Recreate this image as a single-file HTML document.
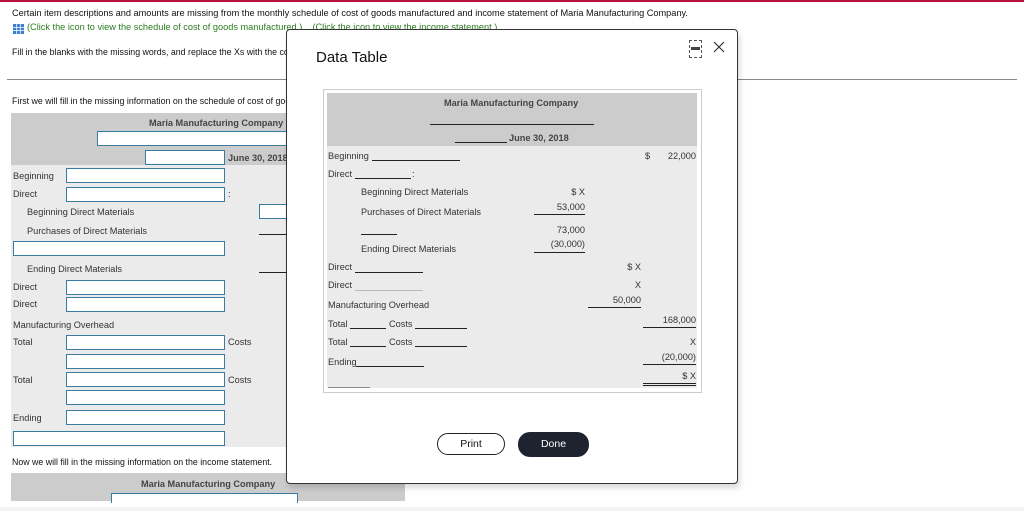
<!DOCTYPE html>
<html><head><style>
*{margin:0;padding:0;box-sizing:border-box}
body{width:1024px;height:511px;overflow:hidden;background:#fff;font-family:"Liberation Sans",Arial,sans-serif;color:#222;position:relative}
.a{position:absolute;white-space:nowrap}
.t{font-size:9.2px;color:#333;margin-top:-1px}
.in{position:absolute;background:#fff;border:1px solid #3a7ca0;height:15px}
.ul{position:absolute;border-bottom:1px solid #222;height:0}
.r{text-align:right}
</style></head><body>
<div class="a" style="left:0;top:0;width:1024px;height:2px;background:#b8123e"></div>
<div class="a" style="left:12px;top:8px;font-size:9.2px;color:#111">Certain item descriptions and amounts are missing from the monthly schedule of cost of goods manufactured and income statement of Maria Manufacturing Company.</div>
<svg class="a" style="left:13px;top:24px" width="11" height="10"><rect x="0" y="0" width="11" height="10" fill="#3b7fd0"/><path d="M0 3.5H11M0 6.5H11M3.7 0V10M7.3 0V10" stroke="#fff" stroke-width="0.8"/></svg>
<div class="a" style="left:27px;top:22px;font-size:9.2px;color:#2a7d1f">(Click the icon to view the schedule of cost of goods manufactured.)&nbsp;&nbsp;&nbsp;&nbsp;(Click the icon to view the income statement.)</div>
<div class="a" style="left:12px;top:47px;font-size:8.8px;color:#111">Fill in the blanks with the missing words, and replace the Xs with the correct amounts.</div>
<div class="a" style="left:7px;top:79px;width:1010px;height:1px;background:#888"></div>
<div class="a" style="left:12px;top:96px;font-size:8.8px;color:#111">First we will fill in the missing information on the schedule of cost of goods manufactured.</div>

<div class="a" style="left:11px;top:113px;width:394px;height:52px;background:#ccc"></div>
<div class="a" style="left:11px;top:165px;width:394px;height:282px;background:#ebebeb"></div>
<div class="a" style="left:149px;top:118px;font-size:9.2px;font-weight:bold;color:#444">Maria Manufacturing Company</div>
<div class="in" style="left:97px;top:131px;width:303px"></div>
<div class="in" style="left:145px;top:150px;width:80px"></div>
<div class="a" style="left:228px;top:153px;font-size:9.2px;font-weight:bold;color:#444">June 30, 2018</div>
<div class="a t" style="left:13px;top:172px">Beginning</div><div class="in" style="left:66px;top:168px;width:159px"></div>
<div class="a t" style="left:13px;top:190px">Direct</div><div class="in" style="left:66px;top:187px;width:159px"></div><div class="a t" style="left:228px;top:190px">:</div>
<div class="a t" style="left:27px;top:208px">Beginning Direct Materials</div><div class="in" style="left:259px;top:204px;width:40px"></div>
<div class="a t" style="left:27px;top:227px">Purchases of Direct Materials</div>
<div class="ul" style="left:259px;top:234px;width:40px"></div>
<div class="in" style="left:13px;top:241px;width:212px"></div>
<div class="a t" style="left:27px;top:265px">Ending Direct Materials</div>
<div class="ul" style="left:259px;top:272px;width:40px"></div>
<div class="a t" style="left:13px;top:283px">Direct</div><div class="in" style="left:66px;top:280px;width:159px"></div>
<div class="a t" style="left:13px;top:300px">Direct</div><div class="in" style="left:66px;top:297px;width:159px"></div>
<div class="a t" style="left:13px;top:321px">Manufacturing Overhead</div>
<div class="a t" style="left:13px;top:338px">Total</div><div class="in" style="left:66px;top:335px;width:159px"></div><div class="a t" style="left:228px;top:338px">Costs</div>
<div class="in" style="left:66px;top:354px;width:159px"></div>
<div class="a t" style="left:13px;top:376px">Total</div><div class="in" style="left:66px;top:372px;width:159px"></div><div class="a t" style="left:228px;top:376px">Costs</div>
<div class="in" style="left:66px;top:390px;width:159px"></div>
<div class="a t" style="left:13px;top:414px">Ending</div><div class="in" style="left:66px;top:410px;width:159px"></div>
<div class="in" style="left:13px;top:431px;width:212px"></div>
<div class="a" style="left:12px;top:457px;font-size:8.8px;color:#111">Now we will fill in the missing information on the income statement.</div>
<div class="a" style="left:11px;top:473px;width:394px;height:28px;background:#ccc"></div>
<div class="a" style="left:141px;top:479px;font-size:9.2px;font-weight:bold;color:#444">Maria Manufacturing Company</div>
<div class="in" style="left:111px;top:493px;width:187px;height:10px;border-bottom:none"></div>
<div class="a" style="left:0;top:507px;width:1024px;height:4px;background:#f3f3f3"></div>

<!-- modal -->
<div class="a" style="left:286px;top:29px;width:452px;height:455px;background:#fff;border:1px solid #333;border-radius:4px;box-shadow:2px 4px 6px rgba(0,0,0,.15)"></div>
<div class="a" style="left:316px;top:49px;font-size:15px;color:#111">Data Table</div>
<div class="a" style="left:689px;top:40px;width:13px;height:18px;border:1px dashed #555"></div>
<div class="a" style="left:691px;top:47px;width:9px;height:3px;background:#444"></div>
<svg class="a" style="left:713px;top:41px" width="12" height="12"><path d="M1 1L11 11M11 1L1 11" stroke="#333" stroke-width="1.2"/></svg>
<div class="a" style="left:323px;top:89px;width:379px;height:304px;border:1px solid #ccc"></div>
<div class="a" style="left:327px;top:93px;width:370px;height:53px;background:#ccc"></div>
<div class="a" style="left:327px;top:146px;width:370px;height:242px;background:#ebebeb"></div>
<div class="a" style="left:444px;top:98px;font-size:9.2px;font-weight:bold;color:#444">Maria Manufacturing Company</div>
<div class="ul" style="left:430px;top:124px;width:164px"></div>
<div class="ul" style="left:455px;top:142px;width:52px"></div>
<div class="a" style="left:509px;top:133px;font-size:9.2px;font-weight:bold;color:#444">June 30, 2018</div>

<div class="a t" style="left:328px;top:152px">Beginning</div><div class="ul" style="left:372px;top:160px;width:88px"></div>
<div class="a t" style="left:645px;top:152px">$</div><div class="a t r" style="left:650px;top:152px;width:46px">22,000</div>
<div class="a t" style="left:328px;top:170px">Direct</div><div class="ul" style="left:355px;top:178px;width:56px"></div><div class="a t" style="left:412px;top:170px">:</div>
<div class="a t" style="left:361px;top:188px">Beginning Direct Materials</div><div class="a t r" style="left:540px;top:188px;width:45px">$ X</div>
<div class="a t" style="left:361px;top:208px">Purchases of Direct Materials</div><div class="a t r" style="left:540px;top:203px;width:45px">53,000</div><div class="ul" style="left:534px;top:214px;width:51px"></div>
<div class="ul" style="left:361px;top:234px;width:36px"></div><div class="a t r" style="left:540px;top:226px;width:45px">73,000</div>
<div class="a t" style="left:361px;top:245px">Ending Direct Materials</div><div class="a t r" style="left:520px;top:240px;width:65px">(30,000)</div><div class="ul" style="left:534px;top:252px;width:51px"></div>
<div class="a t" style="left:328px;top:263px">Direct</div><div class="ul" style="left:355px;top:272px;width:68px"></div><div class="a t r" style="left:600px;top:263px;width:41px">$ X</div>
<div class="a t" style="left:328px;top:281px">Direct</div><div class="ul" style="left:355px;top:290px;width:68px;border-color:#bbb"></div><div class="a t r" style="left:600px;top:281px;width:41px">X</div>
<div class="a t" style="left:328px;top:301px">Manufacturing Overhead</div><div class="a t r" style="left:590px;top:296px;width:51px">50,000</div><div class="ul" style="left:588px;top:307px;width:53px"></div>
<div class="a t" style="left:328px;top:320px">Total</div><div class="ul" style="left:350px;top:328px;width:36px"></div><div class="a t" style="left:389px;top:320px">Costs</div><div class="ul" style="left:415px;top:328px;width:52px"></div>
<div class="a t r" style="left:640px;top:316px;width:56px">168,000</div><div class="ul" style="left:643px;top:327px;width:53px"></div>
<div class="a t" style="left:328px;top:338px">Total</div><div class="ul" style="left:350px;top:346px;width:36px"></div><div class="a t" style="left:389px;top:338px">Costs</div><div class="ul" style="left:415px;top:346px;width:52px"></div>
<div class="a t r" style="left:640px;top:338px;width:56px">X</div>
<div class="a t" style="left:328px;top:358px">Ending</div><div class="ul" style="left:356px;top:366px;width:68px"></div>
<div class="a t r" style="left:640px;top:353px;width:56px">(20,000)</div><div class="ul" style="left:643px;top:364px;width:53px"></div>
<div class="a t r" style="left:640px;top:372px;width:56px">$ X</div>
<div class="a" style="left:643px;top:383px;width:53px;height:3px;border-top:1px solid #222;border-bottom:1px solid #222"></div>
<div class="ul" style="left:328px;top:387px;width:42px;border-color:#888"></div>

<div class="a" style="left:437px;top:433px;width:68px;height:22px;border:1px solid #222;border-radius:11px;font-size:10.5px;text-align:center;line-height:20px;color:#111">Print</div>
<div class="a" style="left:518px;top:432px;width:71px;height:25px;background:#1f2330;border-radius:12px;font-size:10.5px;text-align:center;line-height:25px;color:#fff">Done</div>
</body></html>
